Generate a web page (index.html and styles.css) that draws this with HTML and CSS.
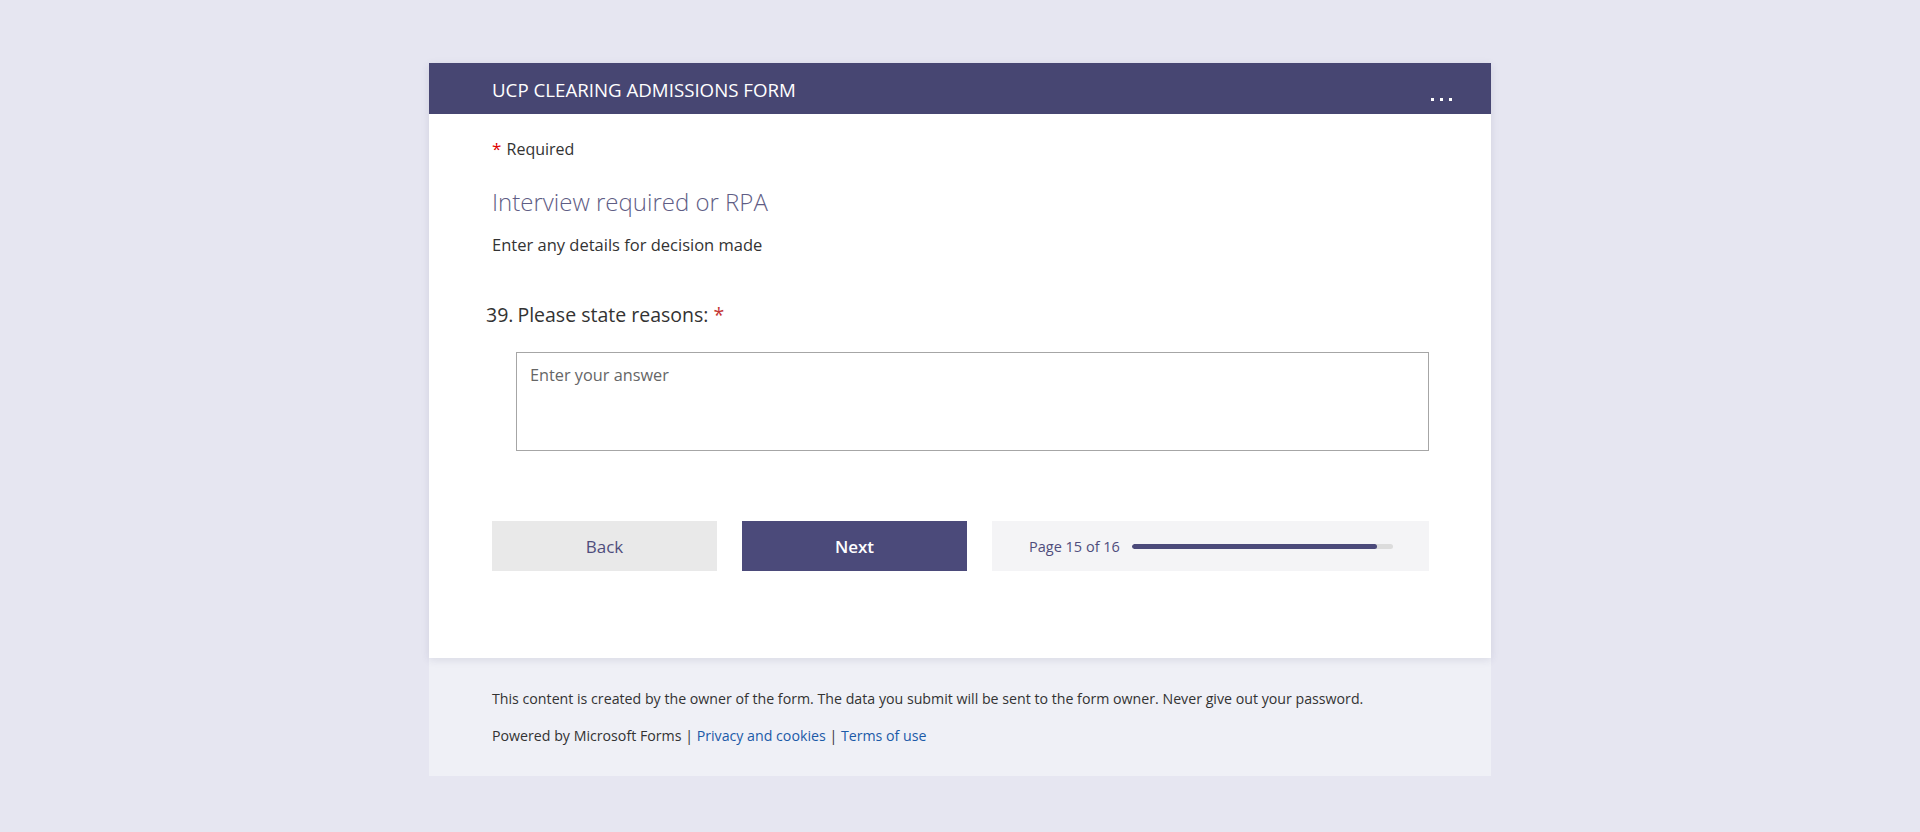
FILE: index.html
```html
<!DOCTYPE html>
<html lang="en">
<head>
<meta charset="utf-8">
<title>UCP Clearing Admissions Form</title>
<link rel="stylesheet" href="styles.css">
</head>
<body>
<div class="page">
  <div class="card">
    <div class="header">
      <div class="form-title">UCP CLEARING ADMISSIONS FORM</div>
      <div class="more"><span></span><span></span><span></span></div>
    </div>
    <div class="body">
      <div class="required-note"><span class="star">*</span> Required</div>
      <div class="section-title">Interview required or RPA</div>
      <div class="section-desc">Enter any details for decision made</div>
      <div class="question">
        <span class="qnum">39.</span><span class="qtext">Please state reasons:</span><span class="qstar">*</span>
      </div>
      <div class="answer-wrap">
        <div class="answer">Enter your answer</div>
      </div>
      <div class="nav">
        <div class="btn btn-back">Back</div>
        <div class="btn btn-next">Next</div>
        <div class="progress">
          <span class="progress-label">Page 15 of 16</span>
          <div class="track"><div class="fill" style="width:94%"></div></div>
        </div>
      </div>
    </div>
  </div>
  <div class="footer">
    <div class="footer-line">This content is created by the owner of the form. The data you submit will be sent to the form owner. Never give out your password.</div>
    <div class="footer-line">Powered by Microsoft Forms | <a class="link">Privacy and cookies</a> | <a class="link">Terms of use</a></div>
  </div>
</div>
</body>
</html>
```

FILE: styles.css
```css
html, body {
  margin: 0;
  padding: 0;
}
body {
  background: #e6e6f1;
  font-family: "Open Sans", "Noto Sans", sans-serif;
  color: #333333;
  height: 832px;
  overflow: hidden;
}
.page {
  width: 1062px;
  margin: 63px auto 0;
}
.card {
  background: #ffffff;
  box-shadow: 0 2px 8px rgba(60, 60, 110, 0.12);
  position: relative;
  z-index: 1;
}
.header {
  height: 51px;
  background: #474672;
  display: flex;
  align-items: center;
  justify-content: space-between;
  padding: 0 39px 0 63px;
}
.form-title {
  color: #ffffff;
  font-size: 18.7px;
  padding-top: 2px;
}
.more {
  display: flex;
  gap: 6px;
  align-self: flex-end;
  margin-bottom: 13px;
}
.more span {
  width: 3px;
  height: 3px;
  background: #ffffff;
}
.body {
  padding: 22px 62px 87px 63px;
}
.required-note {
  font-size: 16px;
  color: #333333;
  line-height: 26px;
}
.star {
  color: #e00000;
  font-size: 17px;
  margin-right: 1px;
}
.section-title {
  margin-top: 24px;
  font-size: 24px;
  font-weight: 300;
  color: #5f5d85;
  line-height: 32px;
}
.section-desc {
  margin-top: 16px;
  font-size: 16.5px;
  color: #333333;
  line-height: 22px;
}
.question {
  margin-top: 45px;
  margin-left: -6px;
  font-size: 19.5px;
  color: #333333;
  line-height: 28px;
}
.qnum {
  margin-right: 4px;
}
.qstar {
  color: #c43535;
  margin-left: 5px;
}
.answer-wrap {
  margin-top: 23px;
  padding-left: 24px;
}
.answer {
  border: 1px solid #a6a6a6;
  padding: 11px 13px;
  box-sizing: border-box;
  height: 99px;
  font-size: 16.3px;
  color: #666666;
  line-height: 22px;
}
.nav {
  margin-top: 70px;
  display: flex;
  gap: 25px;
}
.btn {
  width: 225px;
  height: 50px;
  display: flex;
  align-items: center;
  justify-content: center;
  font-size: 17px;
}
.btn-back {
  background: #e9e9e9;
  color: #4f4d7c;
}
.btn-next {
  background: #4b4a7a;
  color: #ffffff;
  font-weight: 600;
}
.progress {
  flex: 1;
  height: 50px;
  background: #f4f4f6;
  display: flex;
  align-items: center;
  padding: 0 36px 0 37px;
  box-sizing: border-box;
}
.progress-label {
  font-size: 14.5px;
  color: #4f4d7c;
  white-space: nowrap;
}
.track {
  margin-left: 12px;
  flex: 1;
  height: 5px;
  border-radius: 3px;
  background: #dcdcdc;
  overflow: hidden;
}
.fill {
  height: 100%;
  background: #4b4a7a;
  border-radius: 3px;
}
.footer {
  background: #eff0f6;
  padding: 31px 63px 31px;
  font-size: 14.2px;
  color: #333333;
}
.footer-line {
  line-height: 19px;
}
.footer-line + .footer-line {
  margin-top: 18px;
}
.link {
  color: #1b5aa8;
  text-decoration: none;
}
```
